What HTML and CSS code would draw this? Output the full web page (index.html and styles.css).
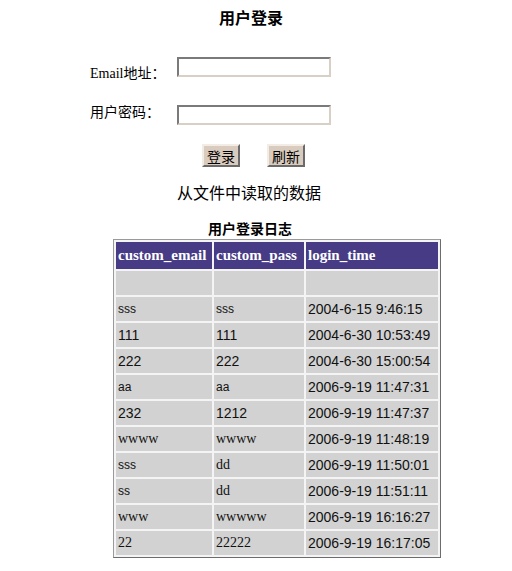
FILE: index.html
```html
<!DOCTYPE html>
<html>
<head>
<meta charset="utf-8">
<link rel="stylesheet" href="styles.css">
</head>
<body>
<h1 class="title">用户登录</h1>
<form class="login">
  <div class="row">
    <label class="lbl"><span class="lat">Email</span>地址：</label>
    <input class="field" type="text">
  </div>
  <div class="row row2">
    <label class="lbl">用户密码：</label>
    <input class="field" type="password">
  </div>
  <div class="buttons">
    <button type="button" class="btn">登录</button>
    <button type="button" class="btn">刷新</button>
  </div>
</form>
<p class="note">从文件中读取的数据</p>
<div class="log">
  <div class="caption">用户登录日志</div>
  <table class="grid">
    <thead>
      <tr><th class="c1">custom_email</th><th class="c2">custom_pass</th><th class="c3">login_time</th></tr>
    </thead>
    <tbody>
      <tr><td></td><td></td><td></td></tr>
      <tr><td class="sm">sss</td><td class="sm">sss</td><td>2004-6-15 9:46:15</td></tr>
      <tr><td>111</td><td>111</td><td>2004-6-30 10:53:49</td></tr>
      <tr><td>222</td><td>222</td><td>2004-6-30 15:00:54</td></tr>
      <tr><td class="sm">aa</td><td class="sm">aa</td><td>2006-9-19 11:47:31</td></tr>
      <tr><td>232</td><td>1212</td><td>2006-9-19 11:47:37</td></tr>
      <tr><td class="sf">wwww</td><td class="sf">wwww</td><td>2006-9-19 11:48:19</td></tr>
      <tr><td class="sm">sss</td><td class="sf">dd</td><td>2006-9-19 11:50:01</td></tr>
      <tr><td class="sm">ss</td><td class="sf">dd</td><td>2006-9-19 11:51:11</td></tr>
      <tr><td class="sf">www</td><td class="sf">wwwww</td><td>2006-9-19 16:16:27</td></tr>
      <tr><td class="sf">22</td><td class="sf">22222</td><td>2006-9-19 16:17:05</td></tr>
    </tbody>
  </table>
</div>
</body>
</html>
```
FILE: styles.css
```css
html, body {
  margin: 0;
  padding: 0;
  background: #ffffff;
}
body {
  width: 512px;
  color: #000;
  font-family: "Liberation Serif", "Noto Sans CJK SC", serif;
}
.title {
  margin: 0;
  padding-top: 7px;
  height: 20px;
  text-align: center;
  font-size: 16px;
  line-height: 20px;
  font-weight: bold;
  font-family: "Noto Sans CJK SC", sans-serif;
  width: 502px;
}
.login {
  margin: 0;
  padding-top: 30px;
}
.row {
  display: flex;
  align-items: flex-start;
  margin-left: 90px;
  height: 20px;
}
.row2 {
  margin-top: 28px;
}
.lbl {
  width: 87px;
  font-size: 14px;
  line-height: 20px;
  padding-top: 7px;
  font-family: "Liberation Serif", "Noto Sans CJK SC", serif;
}
.row2 .lbl {
  padding-top: 0;
  margin-top: -2px;
}
.lat {
  font-family: "Liberation Serif", serif;
}
.field {
  box-sizing: border-box;
  width: 154px;
  height: 20px;
  margin: 0;
  padding: 0;
  background: #ffffff;
  border: 2px solid;
  border-color: #7a7a7a #d8d0c4 #d8d0c4 #7a7a7a;
}
.buttons {
  display: flex;
  justify-content: flex-start;
  gap: 27px;
  margin-left: 202px;
  margin-top: 19px;
}
.btn {
  box-sizing: border-box;
  width: 38px;
  height: 23px;
  margin: 0;
  padding: 0;
  font-size: 14px;
  line-height: 18px;
  font-family: "Noto Sans CJK SC", sans-serif;
  background: #d9cbbd;
  border: 2px solid;
  border-color: #f2ece4 #6a6a6a #6a6a6a #f2ece4;
  color: #000;
}
.note {
  margin: 0;
  margin-top: 13px;
  height: 24px;
  line-height: 24px;
  font-size: 16px;
  text-align: center;
  width: 498px;
  font-family: "Noto Sans CJK SC", sans-serif;
}
.log {
  margin-top: 8px;
}
.caption {
  width: 500px;
  text-align: center;
  font-size: 14px;
  line-height: 18px;
  font-weight: bold;
  height: 18px;
  padding-top: 7px;
  font-family: "Noto Sans CJK SC", sans-serif;
}
.grid {
  margin-left: 113px;
  margin-top: 2px;
  width: 328px;
  table-layout: fixed;
  border-collapse: separate;
  border-spacing: 2px;
  border: 1px solid;
  border-color: #9a9a9a #6c6c6c #6c6c6c #9a9a9a;
  background: #f4f4f4;
}
.grid th, .grid td {
  padding: 0 0 0 2px;
  text-align: left;
  white-space: nowrap;
  overflow: hidden;
}
.grid th {
  height: 27px;
  background: #473b86;
  color: #ffffff;
  font-family: "Liberation Serif", serif;
  font-size: 15px;
  font-weight: bold;
}
.grid td {
  height: 24px;
  background: #d2d2d2;
  font-family: "Liberation Sans", sans-serif;
  font-size: 14px;
  color: #111;
}
.grid td.sm {
  font-size: 12px;
}
.grid td.sf {
  font-family: "Liberation Serif", serif;
  font-size: 14px;
}
.c1 { width: 94px; }
.c2 { width: 88px; }
.c3 { width: 130px; }
```
